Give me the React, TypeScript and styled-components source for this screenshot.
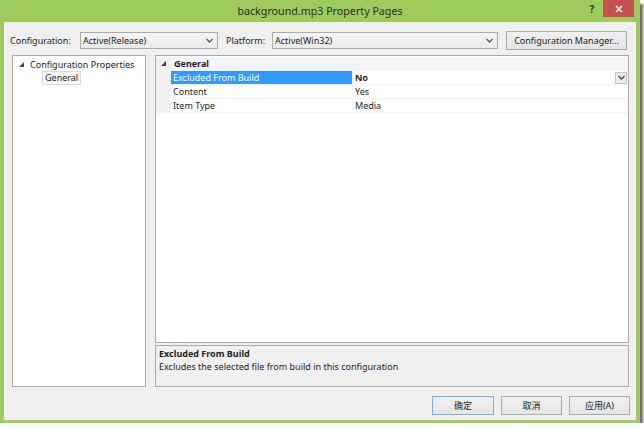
import React from 'react';
import styled, { createGlobalStyle } from 'styled-components';

const GlobalStyle = createGlobalStyle`
  html, body {
    margin: 0;
    padding: 0;
    background: #ffffff;
  }
  body {
    font-family: "Noto Sans", "Noto Sans CJK SC", sans-serif;
    font-size: 9px;
    color: #1e1e1e;
  }
`;

const Window = styled.div`
  width: 640px;
  height: 423px;
  background: #9fcb5d;
  box-shadow: 3px 4px 2px rgba(60, 60, 60, 0.75);
  display: flex;
  flex-direction: column;
  box-sizing: border-box;
  padding: 0 4px 3px 4px;
`;

const TitleBar = styled.div`
  height: 22px;
  position: relative;
  display: flex;
  align-items: center;
  justify-content: center;
  font-size: 10.7px;
  color: #2a2a2a;
`;

const TitleButtons = styled.div`
  position: absolute;
  right: 2px;
  top: 0;
  display: flex;
  align-items: flex-start;
`;

const HelpButton = styled.div`
  width: 22px;
  height: 17px;
  font-size: 10px;
  font-weight: bold;
  color: #333;
  display: flex;
  justify-content: center;
  align-items: center;
`;

const CloseButton = styled.div`
  width: 31px;
  height: 17px;
  background: #c75050;
  color: #fff;
  display: flex;
  justify-content: center;
  align-items: center;
`;

const Client = styled.div`
  flex: 1;
  background: #f0f0f0;
  display: flex;
  flex-direction: column;
  padding: 9px 7px 0 8px;
`;

const Toolbar = styled.div`
  display: flex;
  align-items: center;
  height: 19px;
  margin-left: -2px;
`;

const Label = styled.span<{ width: number }>`
  width: ${({ width }) => width}px;
  flex-shrink: 0;
`;

const Combo = styled.div<{ width: number }>`
  width: ${({ width }) => width}px;
  height: 17px;
  box-sizing: border-box;
  border: 1px solid #acacac;
  background: linear-gradient(#f5f5f5, #eaeaea);
  display: flex;
  align-items: center;
  justify-content: space-between;
  padding: 0 4px 0 2px;
  margin-right: 8px;
`;

const Chevron = ({ color = '#555' }: { color?: string }) => (
  <svg width="7" height="5" viewBox="0 0 7 5">
    <path d="M0.5 1 L3.5 4 L6.5 1" stroke={color} strokeWidth="1.3" fill="none" />
  </svg>
);

const Button = styled.div<{ width: number; focused?: boolean }>`
  width: ${({ width }) => width}px;
  height: 19px;
  box-sizing: border-box;
  border: 1px solid ${({ focused }) => (focused ? '#6fb2f0' : '#acacac')};
  background: linear-gradient(#f0f0f0, #e5e5e5);
  display: flex;
  align-items: center;
  justify-content: center;
  flex-shrink: 0;
`;

const Main = styled.div`
  display: flex;
  gap: 9px;
  margin-top: 5px;
  height: 332px;
`;

const TreePanel = styled.div`
  width: 134px;
  box-sizing: border-box;
  border: 1px solid #aaaaaa;
  background: #fff;
  padding: 2px 0 0 6px;
`;

const TreeRow = styled.div<{ indent: number }>`
  display: flex;
  align-items: center;
  height: 13px;
  padding-left: ${({ indent }) => indent}px;
`;

const Tri = () => (
  <svg width="5" height="5" viewBox="0 0 5 5" style={{ marginRight: 6 }}>
    <path d="M5 0 L5 5 L0 5 Z" fill="#444" />
  </svg>
);

const TreeSelected = styled.span`
  border: 1px solid #dadada;
  background: #f7f7f7;
  padding: 0 2px;
  line-height: 12px;
`;

const RightColumn = styled.div`
  flex: 1;
  display: flex;
  flex-direction: column;
  gap: 2px;
`;

const Grid = styled.div`
  flex: 1;
  box-sizing: border-box;
  border: 1px solid #aaaaaa;
  background: #fff;
  padding-top: 1px;
`;

const GridRow = styled.div`
  display: flex;
  height: 13px;
  border-bottom: 1px solid #f1f3f8;
`;

const Gutter = styled.div`
  width: 15px;
  background: #f0f0f0;
  display: flex;
  align-items: center;
  justify-content: center;
`;

const HeaderCell = styled.div`
  flex: 1;
  background: #f2f5fa;
  font-weight: bold;
  display: flex;
  align-items: center;
  padding-left: 3px;
`;

const NameCell = styled.div<{ selected?: boolean }>`
  width: 179px;
  background: ${({ selected }) => (selected ? '#3399ff' : '#fff')};
  color: ${({ selected }) => (selected ? '#fff' : '#1e1e1e')};
  display: flex;
  align-items: center;
  padding-left: 2px;
  border-right: 1px solid #f1f3f8;
`;

const ValueCell = styled.div<{ bold?: boolean }>`
  flex: 1;
  display: flex;
  align-items: center;
  justify-content: space-between;
  padding-left: 2px;
  font-weight: ${({ bold }) => (bold ? 'bold' : 'normal')};
`;

const DropBtn = styled.div`
  width: 12px;
  height: 12px;
  box-sizing: border-box;
  border: 1px solid #c3c3c3;
  background: #ececec;
  display: flex;
  align-items: center;
  justify-content: center;
  margin-right: 1px;
`;

const Description = styled.div`
  height: 42px;
  box-sizing: border-box;
  border: 1px solid #aaaaaa;
  background: #f0f0f0;
  padding: 1px 3px;
  line-height: 13px;
`;

const DescTitle = styled.div`
  font-weight: bold;
`;

const Footer = styled.div`
  display: flex;
  justify-content: flex-end;
  gap: 7px;
  margin-top: 9px;
  margin-right: -1px;
`;

const props = [
  { name: 'Excluded From Build', value: 'No', selected: true },
  { name: 'Content', value: 'Yes' },
  { name: 'Item Type', value: 'Media' },
];

export default function App() {
  return (
    <>
      <GlobalStyle />
      <Window>
        <TitleBar>
          background.mp3 Property Pages
          <TitleButtons>
            <HelpButton>?</HelpButton>
            <CloseButton>
              <svg width="8" height="8" viewBox="0 0 8 8">
                <path d="M1 1 L7 7 M7 1 L1 7" stroke="#fff" strokeWidth="1.6" />
              </svg>
            </CloseButton>
          </TitleButtons>
        </TitleBar>
        <Client>
          <Toolbar>
            <Label width={70}>Configuration:</Label>
            <Combo width={138}>
              <span>Active(Release)</span>
              <Chevron />
            </Combo>
            <Label width={46}>Platform:</Label>
            <Combo width={226}>
              <span>Active(Win32)</span>
              <Chevron />
            </Combo>
            <Button width={121}>Configuration Manager...</Button>
          </Toolbar>
          <Main>
            <TreePanel>
              <TreeRow indent={0}>
                <Tri />
                <span>Configuration Properties</span>
              </TreeRow>
              <TreeRow indent={23}>
                <TreeSelected>General</TreeSelected>
              </TreeRow>
            </TreePanel>
            <RightColumn>
              <Grid>
                <GridRow>
                  <Gutter>
                    <svg width="5" height="5" viewBox="0 0 5 5">
                      <path d="M5 0 L5 5 L0 5 Z" fill="#444" />
                    </svg>
                  </Gutter>
                  <HeaderCell>General</HeaderCell>
                </GridRow>
                {props.map((p) => (
                  <GridRow key={p.name}>
                    <Gutter />
                    <NameCell selected={p.selected}>{p.name}</NameCell>
                    <ValueCell bold={p.selected}>
                      <span>{p.value}</span>
                      {p.selected && (
                        <DropBtn>
                          <Chevron color="#444" />
                        </DropBtn>
                      )}
                    </ValueCell>
                  </GridRow>
                ))}
              </Grid>
              <Description>
                <DescTitle>Excluded From Build</DescTitle>
                <div>Excludes the selected file from build in this configuration</div>
              </Description>
            </RightColumn>
          </Main>
          <Footer>
            <Button width={62} focused>确定</Button>
            <Button width={61}>取消</Button>
            <Button width={61}>应用(A)</Button>
          </Footer>
        </Client>
      </Window>
    </>
  );
}
